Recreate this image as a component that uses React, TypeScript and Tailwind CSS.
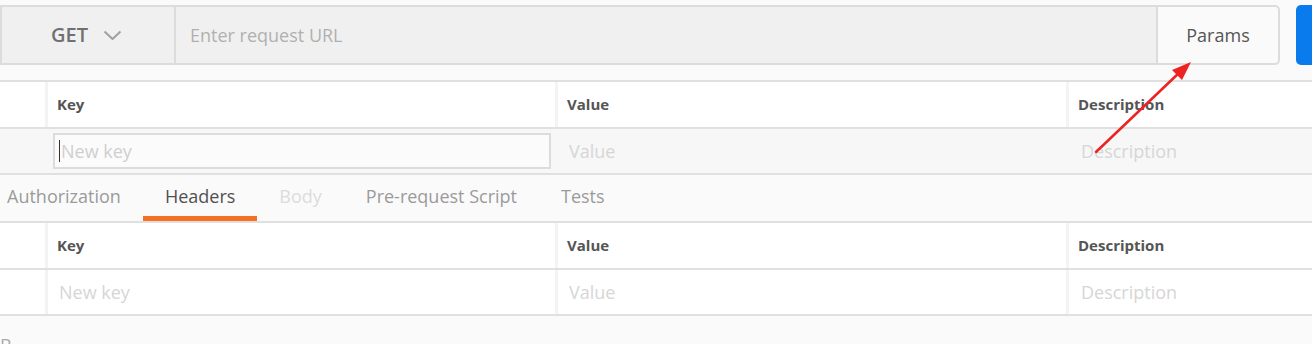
const font = { fontFamily: '"Open Sans", "Noto Sans", sans-serif' }

const tabs = [
  { label: 'Authorization', cls: 'text-[#9a9a9a]' },
  { label: 'Headers', cls: 'text-[#505050]', active: true },
  { label: 'Body', cls: 'text-[#dcdcdc]' },
  { label: 'Pre-request Script', cls: 'text-[#9a9a9a]' },
  { label: 'Tests', cls: 'text-[#9a9a9a]' },
]

function HeaderRow() {
  return (
    <div className="flex h-[45px] bg-white text-[15px] font-bold text-[#555]">
      <div className="w-[45px] shrink-0 bg-white" />
      <div className="w-[510px] shrink-0 border-l-[3px] border-[#f3f3f3] pl-[9px] flex items-center">Key</div>
      <div className="w-[511px] shrink-0 border-l-[3px] border-[#f3f3f3] pl-[9px] flex items-center">Value</div>
      <div className="flex-1 border-l-[3px] border-[#f3f3f3] pl-[9px] flex items-center">Description</div>
    </div>
  )
}

export default function App() {
  return (
    <div className="relative w-[1312px] h-[344px] overflow-hidden bg-[#fafafa]" style={font}>
      {/* URL BAR */}
      <div className="flex pt-[5px] h-[65px]">
        <div className="w-[174px] shrink-0 flex items-center bg-[#f0f0f0] border-2 border-r-0 border-[#dcdcdc]">
          <span className="ml-[49px] text-[20px] font-semibold text-[#707070]">GET</span>
          <svg className="ml-[15px]" width="19" height="11" viewBox="0 0 19 11">
            <polyline points="1.5,1.5 9.5,9 17.5,1.5" fill="none" stroke="#a0a0a0" strokeWidth="2" strokeLinejoin="round" />
          </svg>
        </div>
        <div className="w-[984px] shrink-0 flex items-center bg-[#f0f0f0] border-2 border-[#dcdcdc] pl-[14px] text-[18px] text-[#b0b0b0]">
          Enter request URL
        </div>
        <div className="w-[122px] shrink-0 flex items-center justify-center bg-[#fafafa] border-2 border-l-0 border-[#dcdcdc] rounded-r-[5px] text-[18px] text-[#555]">
          Params
        </div>
        <div className="ml-[16px] w-[100px] shrink-0 bg-[#097bed] rounded-l-[5px]" />
      </div>

      {/* PARAMS TABLE */}
      <div className="mt-[15px] border-t-2 border-[#e0e0e0]">
        <HeaderRow />
        <div className="flex h-[48px] bg-[#f7f7f7] border-t-2 border-b-2 border-[#e0e0e0] text-[18px]">
          <div className="w-[48px] shrink-0" />
          <div className="w-[507px] shrink-0 flex items-center">
            <div className="ml-[5px] w-[498px] h-[36px] border-2 border-[#dcdcdc] bg-[#fbfbfb] flex items-center pl-[4px]">
              <span className="w-[1px] h-[22px] bg-[#333]" />
              <span className="ml-[1px] text-[#cfcfcf]">New key</span>
            </div>
          </div>
          <div className="w-[511px] shrink-0 pl-[14px] flex items-center text-[#d6d6d6]">Value</div>
          <div className="flex-1 pl-[15px] flex items-center text-[#d6d6d6]">Description</div>
        </div>
      </div>

      {/* TABS */}
      <div className="flex h-[46px] ml-[-15px] bg-[#fafafa] text-[18px]">
        {tabs.map(t => (
          <div key={t.label} className={`relative px-[22px] pb-[4px] flex items-center ${t.cls}`}>
            {t.label}
            {t.active && <span className="absolute left-0 right-0 bottom-0 h-[5px] bg-[#f47023]" />}
          </div>
        ))}
      </div>

      {/* HEADERS TABLE */}
      <div className="border-t-2 border-[#e0e0e0]">
        <HeaderRow />
        <div className="flex h-[48px] bg-white border-t-2 border-b-2 border-[#e0e0e0] text-[18px] text-[#d6d6d6]">
          <div className="w-[45px] shrink-0" />
          <div className="w-[510px] shrink-0 border-l-[3px] border-[#f3f3f3] pl-[11px] flex items-center">New key</div>
          <div className="w-[511px] shrink-0 border-l-[3px] border-[#f3f3f3] pl-[11px] flex items-center">Value</div>
          <div className="flex-1 border-l-[3px] border-[#f3f3f3] pl-[12px] flex items-center">Description</div>
        </div>
      </div>

      <div className="pt-[20px] text-[18px] text-[#aaa] leading-none">B</div>

      {/* ANNOTATION ARROW */}
      <svg className="absolute left-0 top-0 pointer-events-none" width="1312" height="344">
        <line x1="1096" y1="152" x2="1180" y2="72" stroke="#ee2222" strokeWidth="2.5" strokeLinecap="round" />
        <polygon points="1191,62 1172,70 1182,80" fill="#ee2222" />
      </svg>
    </div>
  )
}
